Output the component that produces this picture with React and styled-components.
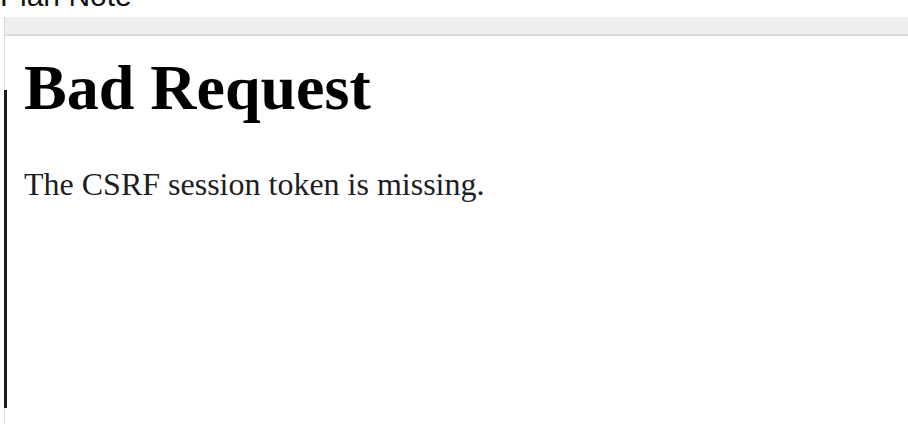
import React from 'react'
import styled, { createGlobalStyle } from 'styled-components'

const GlobalStyle = createGlobalStyle`
  html, body {
    margin: 0;
    padding: 0;
    background: #ffffff;
    overflow: hidden;
  }
`

const Page = styled.div`
  width: 908px;
  height: 424px;
  overflow: hidden;
  background: #ffffff;
`

// the window title, cut off by the top edge
const Caption = styled.div`
  height: 17px;
  overflow: hidden;
  font-family: "Liberation Sans", Arial, sans-serif;
  font-size: 30px;
  line-height: 30px;
  color: #111;
  white-space: nowrap;
  span {
    display: block;
    margin-top: -19px;
  }
`

const Frame = styled.div`
  margin-left: 4px;
  border-left: 1px solid #dcdcdc;
  height: 407px;
  display: flex;
  flex-direction: column;
`

const Toolbar = styled.div`
  flex: 0 0 17px;
  background: #f0efee;
  border-bottom: 2px solid #d9d7d9;
  box-shadow: 0 2px 3px rgba(0, 0, 0, 0.03);
`

const Body = styled.div`
  flex: 1;
  display: flex;
`

const Rail = styled.div`
  flex: 0 0 3px;
  margin-left: -1px;
  margin-top: 54px;
  height: 318px;
  background: #1b1b1d;
`

const Content = styled.div`
  flex: 1;
  padding-left: 17px;
  font-family: "Liberation Serif", "Times New Roman", serif;
`

const Heading = styled.h1`
  margin: 20px 0 0;
  font-size: 64px;
  line-height: 64px;
  font-weight: 700;
  color: #000;
`

const Message = styled.p`
  margin: 48px 0 0;
  font-size: 32px;
  line-height: 32px;
  color: #1d1d26;
`

export default function App() {
  return (
    <Page>
      <GlobalStyle />
      <Caption><span>Plan Note</span></Caption>
      <Frame>
        <Toolbar />
        <Body>
          <Rail />
          <Content>
            <Heading>Bad Request</Heading>
            <Message>The CSRF session token is missing.</Message>
          </Content>
        </Body>
      </Frame>
    </Page>
  )
}
